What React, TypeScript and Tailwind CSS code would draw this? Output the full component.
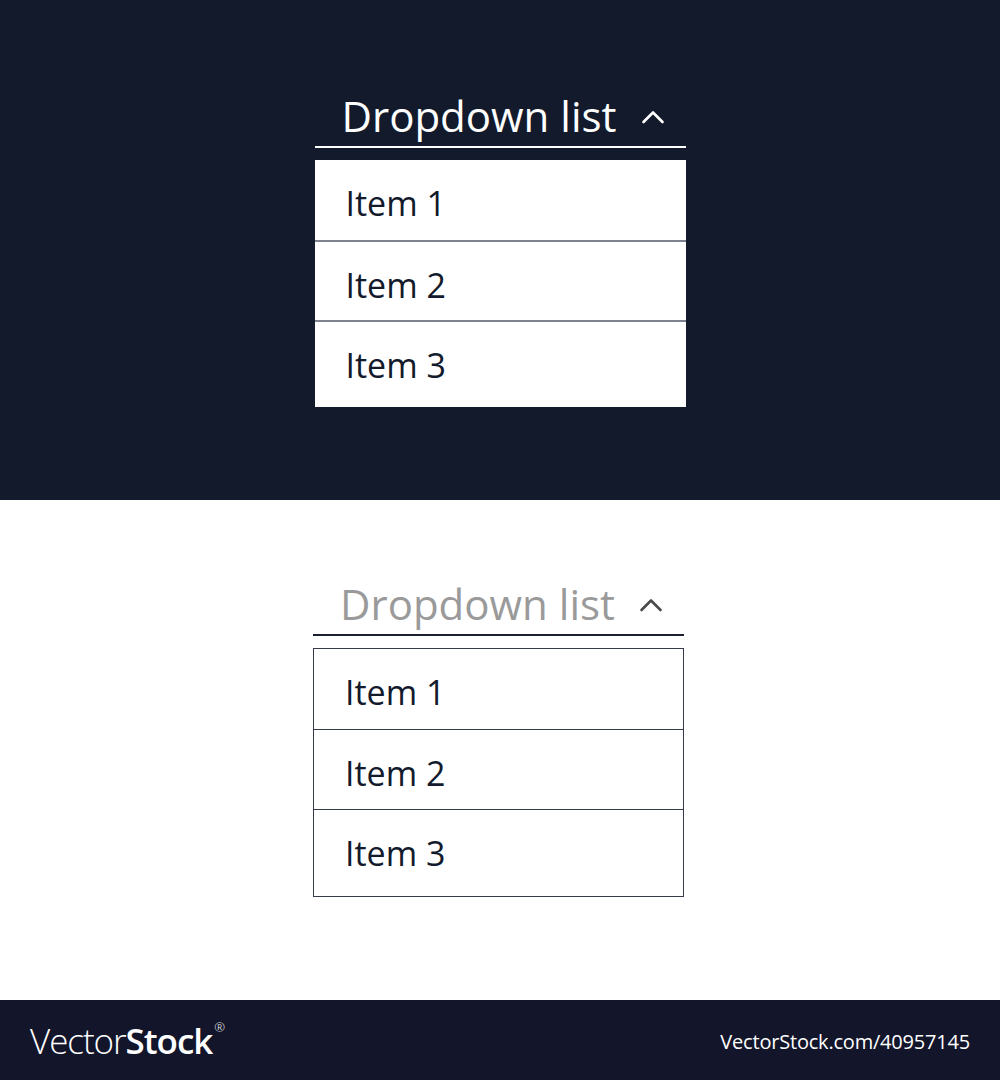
import React from 'react';

type Theme = 'dark' | 'light';

const items = ['Item 1', 'Item 2', 'Item 3'];

const Chevron: React.FC<{ className?: string }> = ({ className }) => (
  <svg width="24" height="14" viewBox="0 0 24 14" fill="none" className={className}>
    <path d="M2.5 12 L12 2.5 L21.5 12" stroke="currentColor" strokeWidth="2.6" strokeLinecap="round" strokeLinejoin="round" />
  </svg>
);

const Dropdown: React.FC<{ theme: Theme }> = ({ theme }) => {
  const dark = theme === 'dark';

  return (
    <div className="w-[371px] flex flex-col font-['Open_Sans',sans-serif]">
      <div
        className={`flex items-center pl-[27px] pb-[6px] border-b-2 ${
          dark ? 'border-white' : 'border-[#1a2030]'
        }`}
      >
        <span className={`text-[42px] leading-[48px] ${dark ? 'text-white' : 'text-[#9a9a9a]'}`}>
          Dropdown list
        </span>
        <Chevron className={`ml-auto mr-[21px] mt-[2px] ${dark ? 'text-white' : 'text-[#4a4a4a]'}`} />
      </div>

      <ul className={`mt-[12px] bg-white ${dark ? '' : 'border border-[#353b4a]'}`}>
        {items.map((item, i) => (
          <li
            key={item}
            className={`pl-[31px] ${i === items.length - 1 ? 'h-[87px]' : 'h-[80px]'} ${
              i > 0 ? (dark ? 'border-t-2 border-[#7d828e]' : 'border-t border-[#353b4a]') : ''
            }`}
          >
            <span className="block pt-[3px] text-[34px] leading-[80px] text-[#121a2c]">{item}</span>
          </li>
        ))}
      </ul>
    </div>
  );
};

const App: React.FC = () => {
  return (
    <div className="w-[1000px] h-[1080px] flex flex-col">
      <section className="h-[500px] bg-[#121a2c] flex justify-center pt-[92px]">
        <Dropdown theme="dark" />
      </section>

      <section className="h-[500px] bg-white flex justify-center pt-[80px]">
        <div className="-ml-[3px]">
          <Dropdown theme="light" />
        </div>
      </section>

      <footer className="h-[80px] bg-[#13152a] flex items-center justify-between px-[30px] text-white font-['Open_Sans',sans-serif]">
        <div className="flex items-start text-[35px] leading-none tracking-[-0.03em]">
          <span className="font-light">Vector</span>
          <span className="font-semibold">Stock</span>
          <span className="text-[13px] font-light ml-[2px] mt-[-2px]">®</span>
        </div>
        <span className="text-[20px] tracking-[-0.01em] mt-[4px]">VectorStock.com/40957145</span>
      </footer>
    </div>
  );
};

export default App;
